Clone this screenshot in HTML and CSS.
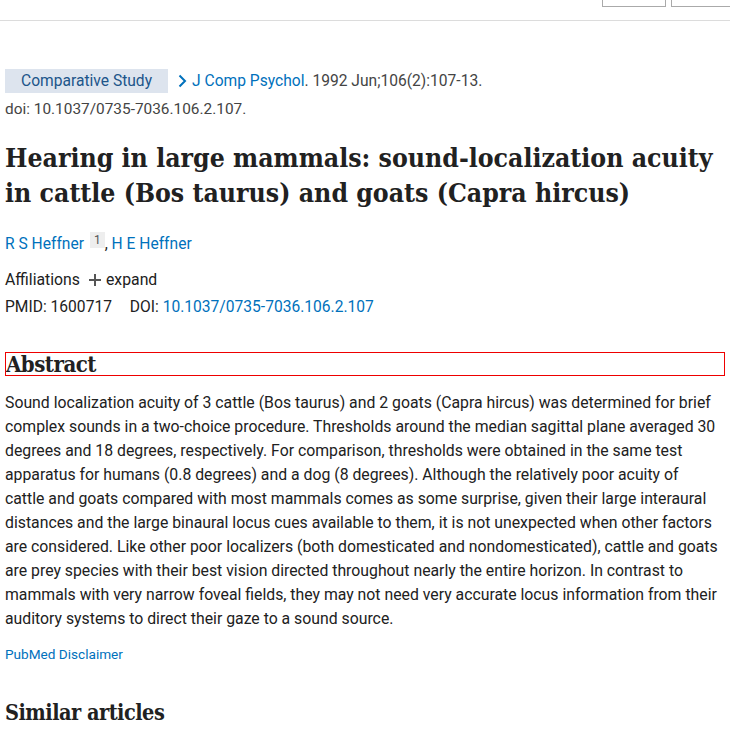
FILE: index.html
```html
<!DOCTYPE html>
<html>
<head>
<meta charset="utf-8">
<link rel="stylesheet" href="styles.css">
</head>
<body>
<header class="topbar">
  <div class="top-actions">
    <span class="top-btn"></span>
    <span class="top-btn wide"></span>
  </div>
</header>
<main class="article">
  <div class="meta">
    <span class="badge">Comparative Study</span>
    <svg class="chev" width="10" height="14" viewBox="0 0 10 14"><path d="M2.5 1.5 L8 7 L2.5 12.5" fill="none" stroke="#0071bc" stroke-width="2"/></svg>
    <span class="cite"><a class="link">J Comp Psychol</a>. 1992 Jun;106(2):107-13.</span>
  </div>
  <div class="doi-line">doi: 10.1037/0735-7036.106.2.107.</div>
  <h1 class="title">Hearing in large mammals: sound-localization acuity in cattle (Bos taurus) and goats (Capra hircus)</h1>
  <div class="authors"><a class="link">R S Heffner</a> <sup class="aff">1</sup>, <a class="link">H E Heffner</a></div>
  <div class="affil">Affiliations <svg class="plus" width="14" height="14" viewBox="0 0 14 14"><path d="M7 1 V13 M1 7 H13" stroke="#555" stroke-width="2"/></svg> expand</div>
  <div class="ids">PMID: 1600717 <span class="doi-label">DOI:</span> <a class="link">10.1037/0735-7036.106.2.107</a></div>
  <h2 class="section-title boxed">Abstract</h2>
  <p class="abstract">Sound localization acuity of 3 cattle (Bos taurus) and 2 goats (Capra hircus) was determined for brief complex sounds in a two-choice procedure. Thresholds around the median sagittal plane averaged 30 degrees and 18 degrees, respectively. For comparison, thresholds were obtained in the same test apparatus for humans (0.8 degrees) and a dog (8 degrees). Although the relatively poor acuity of cattle and goats compared with most mammals comes as some surprise, given their large interaural distances and the large binaural locus cues available to them, it is not unexpected when other factors are considered. Like other poor localizers (both domesticated and nondomesticated), cattle and goats are prey species with their best vision directed throughout nearly the entire horizon. In contrast to mammals with very narrow foveal fields, they may not need very accurate locus information from their auditory systems to direct their gaze to a sound source.</p>
  <a class="link disclaimer">PubMed Disclaimer</a>
  <h2 class="section-title similar">Similar articles</h2>
</main>
</body>
</html>
```
FILE: styles.css
```css
html, body {
  margin: 0;
  padding: 0;
  background: #fff;
}
body {
  font-family: Roboto, "Open Sans", sans-serif;
  color: #212121;
  overflow: hidden;
  height: 730px;
}
.topbar {
  height: 20px;
  border-bottom: 1px solid #dcdcdc;
  display: flex;
  justify-content: flex-end;
}
.top-actions {
  display: flex;
  gap: 5px;
  align-items: flex-start;
  margin-right: -11px;
}
.top-btn {
  display: block;
  width: 62px;
  height: 6px;
  border: 1px solid #aaa;
  border-top: none;
}
.top-btn.wide {
  width: 68px;
}
.article {
  padding: 48px 5px 0 5px;
}
.link {
  color: #0071bc;
  text-decoration: none;
}
.meta {
  display: flex;
  align-items: center;
  font-size: 15.6px;
  height: 24px;
  color: #444;
}
.badge {
  background: #dde4ee;
  color: #20558a;
  padding: 0 16px;
  height: 24px;
  line-height: 24px;
  margin-right: 9px;
}
.chev {
  margin-right: 5px;
}
.doi-line {
  font-size: 15.4px;
  color: #444;
  margin-top: 5px;
  line-height: 22px;
}
.title {
  font-family: "DejaVu Serif Condensed", "DejaVu Serif", serif;
  font-stretch: condensed;
  font-weight: bold;
  font-size: 26.4px;
  line-height: 35px;
  margin: 20px 0 0 0;
  color: #212121;
}
.authors {
  font-size: 15.6px;
  margin-top: 22px;
  line-height: 24px;
}
.aff {
  font-size: 12px;
  background: #eee;
  color: #555;
  padding: 1px 4px;
  margin-left: 2px;
  vertical-align: 5px;
  line-height: 13px;
}
.affil {
  font-size: 15.8px;
  margin-top: 12px;
  line-height: 24px;
  display: flex;
  align-items: center;
}
.plus {
  margin: 0 4px 0 8px;
}
.ids {
  font-size: 15.6px;
  line-height: 24px;
  margin-top: 3px;
}
.doi-label {
  margin-left: 14px;
}
.section-title {
  font-family: "DejaVu Serif Condensed", "DejaVu Serif", serif;
  font-stretch: condensed;
  font-weight: bold;
  font-size: 22px;
  letter-spacing: -0.5px;
  margin: 0;
  color: #212121;
}
.boxed {
  margin-top: 33px;
  border: 1px solid #e00;
  line-height: 22px;
}
.abstract {
  font-size: 15.8px;
  line-height: 24px;
  margin: 15px 0 0 0;
  padding-right: 6px;
}
.disclaimer {
  display: block;
  font-size: 13.6px;
  margin-top: 15px;
}
.similar {
  margin-top: 37px;
  font-size: 21.5px;
  line-height: 28px;
}
```
